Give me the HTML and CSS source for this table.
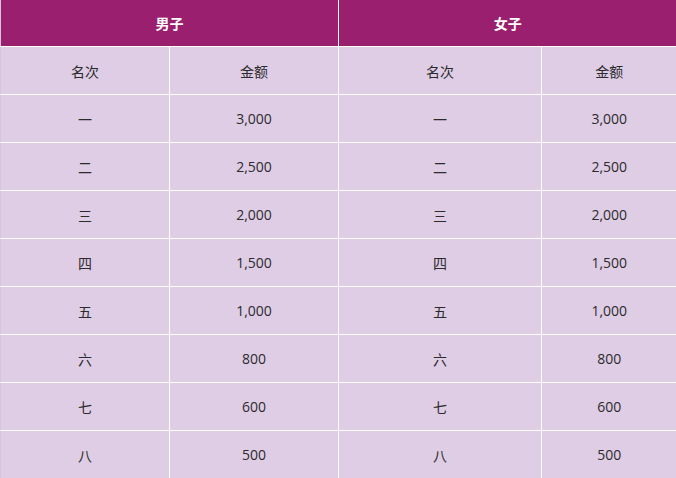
FILE: index.html
```html
<!DOCTYPE html>
<html>
<head>
<meta charset="utf-8">
<link rel="stylesheet" href="styles.css">
</head>
<body>
<table class="prize">
  <colgroup>
    <col class="c1"><col class="c2"><col class="c3"><col class="c4">
  </colgroup>
  <thead>
    <tr class="head"><th colspan="2">男子</th><th colspan="2">女子</th></tr>
  </thead>
  <tbody>
    <tr><td>名次</td><td>金额</td><td>名次</td><td>金额</td></tr>
    <tr><td>一</td><td>3,000</td><td>一</td><td>3,000</td></tr>
    <tr><td>二</td><td>2,500</td><td>二</td><td>2,500</td></tr>
    <tr><td>三</td><td>2,000</td><td>三</td><td>2,000</td></tr>
    <tr><td>四</td><td>1,500</td><td>四</td><td>1,500</td></tr>
    <tr><td>五</td><td>1,000</td><td>五</td><td>1,000</td></tr>
    <tr><td>六</td><td>800</td><td>六</td><td>800</td></tr>
    <tr><td>七</td><td>600</td><td>七</td><td>600</td></tr>
    <tr><td>八</td><td>500</td><td>八</td><td>500</td></tr>
  </tbody>
</table>
</body>
</html>
```
FILE: styles.css
```css
html, body { margin: 0; padding: 0; background: #ffffff; }
.prize {
  width: 676px;
  border-collapse: collapse;
  table-layout: fixed;
  font-family: "Open Sans", "Noto Sans CJK SC", sans-serif;
  font-size: 14px;
  color: #2b2b2b;
}
.c1 { width: 169px; }
.c2 { width: 169px; }
.c3 { width: 203px; }
.c4 { width: 135px; }
.prize th, .prize td {
  border: 1px solid #ffffff;
  text-align: center;
  padding: 0;
}
.prize th {
  background: #9a1f6e;
  color: #ffffff;
  font-weight: bold;
  height: 46px;
  font-family: "Noto Sans CJK SC", sans-serif;
}
.prize td {
  background: #dfcde6;
  height: 47px;
}
.prize tr > :first-child { border-left: 1px solid #d3c6d8; }
.prize tr > :last-child { border-right: 0; }
.prize thead th { border-top: 0; }
.prize tbody tr:last-child td { border-bottom: 0; }
```
